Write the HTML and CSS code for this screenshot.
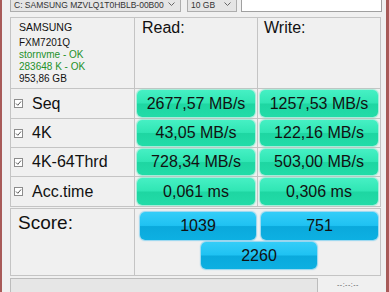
FILE: index.html
```html
<!DOCTYPE html>
<html>
<head>
  <title>AS SSD Benchmark</title>
  <link rel="stylesheet" href="styles.css">
</head>
<body>
  <div class="window">
    <div class="topbar">
      <div class="combo drive">
        <span>C: SAMSUNG MZVLQ1T0HBLB-00B00</span>
        <svg class="chevron" width="7" height="4" viewBox="0 0 7 4"><path d="M0.5 0.5 L3.5 3.5 L6.5 0.5" fill="none" stroke="#666" stroke-width="1"/></svg>
      </div>
      <div class="combo size">
        <span>10 GB</span>
        <svg class="chevron" width="7" height="4" viewBox="0 0 7 4"><path d="M0.5 0.5 L3.5 3.5 L6.5 0.5" fill="none" stroke="#666" stroke-width="1"/></svg>
      </div>
      <div class="textbox"></div>
    </div>

    <!-- Ergebnis-Tabelle -->
    <div class="results">
      <div class="cell info">
        <div class="vendor">SAMSUNG</div>
        <div>FXM7201Q</div>
        <div class="ok">stornvme - OK</div>
        <div class="ok">283648 K - OK</div>
        <div>953,86 GB</div>
      </div>
      <div class="cell head read">Read:</div>
      <div class="cell head write">Write:</div>

      <div class="cell label"><svg class="check" width="9" height="9" viewBox="0 0 9 9"><rect x="0.5" y="0.5" width="8" height="8" fill="#fff" stroke="#8c8c8c"/><path d="M2 4.5 L3.8 6.3 L7 2.5" fill="none" stroke="#555" stroke-width="1"/></svg>Seq</div>
      <div class="cell val-cell"><div class="val">2677,57 MB/s</div></div>
      <div class="cell val-cell"><div class="val">1257,53 MB/s</div></div>

      <div class="cell label"><svg class="check" width="9" height="9" viewBox="0 0 9 9"><rect x="0.5" y="0.5" width="8" height="8" fill="#fff" stroke="#8c8c8c"/><path d="M2 4.5 L3.8 6.3 L7 2.5" fill="none" stroke="#555" stroke-width="1"/></svg>4K</div>
      <div class="cell val-cell"><div class="val">43,05 MB/s</div></div>
      <div class="cell val-cell"><div class="val">122,16 MB/s</div></div>

      <div class="cell label"><svg class="check" width="9" height="9" viewBox="0 0 9 9"><rect x="0.5" y="0.5" width="8" height="8" fill="#fff" stroke="#8c8c8c"/><path d="M2 4.5 L3.8 6.3 L7 2.5" fill="none" stroke="#555" stroke-width="1"/></svg>4K-64Thrd</div>
      <div class="cell val-cell"><div class="val">728,34 MB/s</div></div>
      <div class="cell val-cell"><div class="val">503,00 MB/s</div></div>

      <div class="cell label"><svg class="check" width="9" height="9" viewBox="0 0 9 9"><rect x="0.5" y="0.5" width="8" height="8" fill="#fff" stroke="#8c8c8c"/><path d="M2 4.5 L3.8 6.3 L7 2.5" fill="none" stroke="#555" stroke-width="1"/></svg>Acc.time</div>
      <div class="cell val-cell"><div class="val">0,061 ms</div></div>
      <div class="cell val-cell"><div class="val">0,306 ms</div></div>
    </div>

    <!-- Score -->
    <div class="score">
      <div class="cell score-label">Score:</div>
      <div class="cell score-values">
        <div class="val blue">1039</div>
        <div class="val blue">751</div>
        <div class="val blue total">2260</div>
      </div>
    </div>

    <div class="statusbar">
      <div class="progress"></div>
      <span class="time">--:--:--</span>
    </div>
  </div>
</body>
</html>
```

FILE: styles.css
```css
html, body {
  margin: 0;
  padding: 0;
}

body {
  font-family: 'Liberation Sans', Arial, sans-serif;
  background-color: #f0f0f0;
  color: #111111;
  overflow: hidden;
}

.window {
  width: 389px;
  height: 292px;
  box-sizing: border-box;
  border-left: 2px solid #a85a58;
  border-right: 3px solid #a85a58;
  padding-left: 8px;
  overflow: hidden;
}

/* Kopfzeile mit Auswahlfeldern */
.topbar {
  display: flex;
  align-items: flex-end;
  height: 12px;
}

.combo {
  display: flex;
  align-items: flex-end;
  justify-content: space-between;
  box-sizing: border-box;
  height: 12px;
  border: 1px solid #adadad;
  border-top: none;
  background-color: #e5e5e5;
  color: #333333;
  font-size: 8.5px;
  line-height: 10px;
  padding: 0 5px 1px 3px;
}

.combo .chevron {
  margin-bottom: 4px;
}

.drive {
  width: 171px;
}

.size {
  width: 50px;
  margin-left: 6px;
}

.textbox {
  width: 141px;
  height: 12px;
  box-sizing: border-box;
  margin-left: 4px;
  background-color: #ffffff;
  border: 1px solid #a0a0a0;
  border-top: none;
}

/* Tabelle */
.results {
  display: grid;
  grid-template-columns: 123px 122px 122px;
  grid-template-rows: 70px 29px 28px 28px 29px;
  gap: 1px;
  padding: 1px;
  width: 371px;
  box-sizing: border-box;
  margin-top: 5px;
  background-color: #c4c4c4;
}

.cell {
  background-color: #f0f0f0;
  box-sizing: border-box;
}

.info {
  padding: 3px 0 0 8px;
  font-size: 10px;
  line-height: 12px;
}

.info .vendor {
  font-size: 10.5px;
  margin-bottom: 3.5px;
}

.info .ok {
  color: #23902a;
}

.head {
  font-size: 16px;
  line-height: 18px;
  padding-top: 1px;
}

.read {
  padding-left: 7px;
}

.write {
  padding-left: 6px;
}

.label {
  display: flex;
  align-items: center;
  padding-left: 3px;
  font-size: 16px;
}

.check {
  margin-right: 9px;
}

.val-cell {
  padding: 1px 2px 1px 2px;
}

.val {
  height: 100%;
  box-sizing: border-box;
  border-radius: 5px;
  text-align: center;
  font-size: 16px;
  display: flex;
  align-items: center;
  justify-content: center;
  background: linear-gradient(to bottom, #46f0c4 0%, #30e6b4 48%, #1ed6a2 52%, #22dca8 100%);
  box-shadow: 0 0 1px 1px rgba(90, 235, 195, 0.55);
}

/* Score */
.score {
  display: grid;
  grid-template-columns: 123px 1fr;
  gap: 1px;
  padding: 1px;
  width: 371px;
  height: 68px;
  box-sizing: border-box;
  margin-top: 1px;
  background-color: #c4c4c4;
}

.score-label {
  font-size: 19px;
  padding: 3px 0 0 7px;
}

.score-values {
  display: grid;
  grid-template-columns: 116px 117px;
  grid-template-rows: 28px 27px;
  gap: 2px 5px;
  padding: 3px 0 0 5px;
}

.blue {
  background: linear-gradient(to bottom, #34cdf8 0%, #1fc2f2 48%, #0aa9dc 52%, #0db0e2 100%);
  box-shadow: 0 0 1px 1px rgba(60, 190, 240, 0.5);
}

.total {
  grid-column: 1 / 3;
  justify-self: center;
  width: 116px;
}

/* Statusleiste */
.statusbar {
  display: flex;
  align-items: flex-start;
  margin-top: 2px;
}

.progress {
  width: 308px;
  height: 16px;
  box-sizing: border-box;
  background-color: #e6e6e6;
  border: 1px solid #bcbcbc;
}

.time {
  margin-left: 19px;
  margin-top: 3px;
  font-size: 7px;
  color: #555555;
  letter-spacing: 0.5px;
}
```
